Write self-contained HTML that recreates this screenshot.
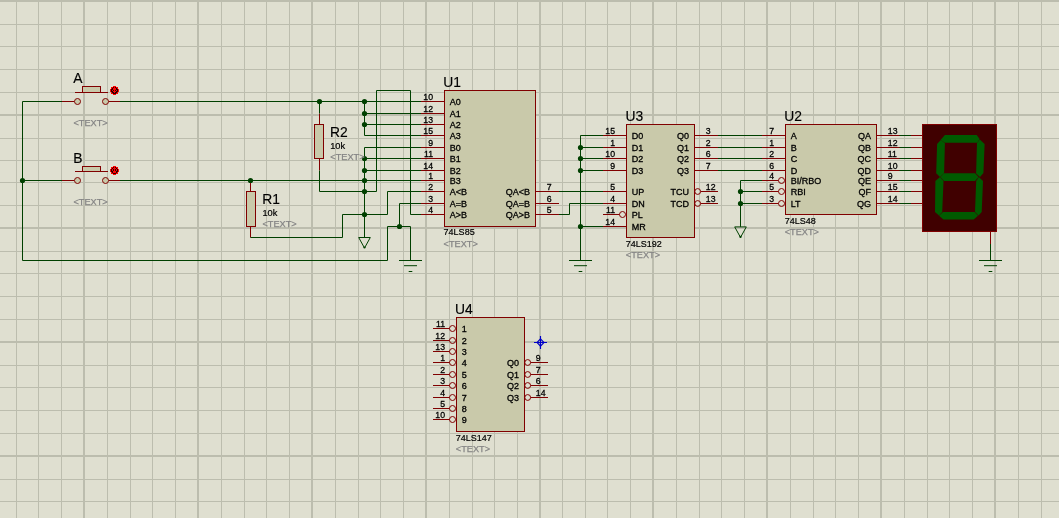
<!DOCTYPE html>
<html><head><meta charset="utf-8"><style>html,body{margin:0;padding:0;background:#dfdfd0;width:1059px;height:518px;overflow:hidden}svg{display:block}</style></head>
<body><svg width="1059" height="518" viewBox="0 0 1059 518" style="will-change:transform">
<rect width="1059" height="518" fill="#dfdfd0"/>
<g fill="#bcbdae"><rect x="16" y="0" width="1" height="518"/><rect x="38" y="0" width="1" height="518"/><rect x="61" y="0" width="1" height="518"/><rect x="83" y="0" width="2" height="518"/><rect x="107" y="0" width="1" height="518"/><rect x="130" y="0" width="1" height="518"/><rect x="152" y="0" width="1" height="518"/><rect x="175" y="0" width="1" height="518"/><rect x="197" y="0" width="2" height="518"/><rect x="221" y="0" width="1" height="518"/><rect x="244" y="0" width="1" height="518"/><rect x="266" y="0" width="1" height="518"/><rect x="289" y="0" width="1" height="518"/><rect x="311" y="0" width="2" height="518"/><rect x="335" y="0" width="1" height="518"/><rect x="358" y="0" width="1" height="518"/><rect x="380" y="0" width="1" height="518"/><rect x="403" y="0" width="1" height="518"/><rect x="425" y="0" width="2" height="518"/><rect x="449" y="0" width="1" height="518"/><rect x="472" y="0" width="1" height="518"/><rect x="494" y="0" width="1" height="518"/><rect x="517" y="0" width="1" height="518"/><rect x="539" y="0" width="2" height="518"/><rect x="562" y="0" width="1" height="518"/><rect x="585" y="0" width="1" height="518"/><rect x="607" y="0" width="1" height="518"/><rect x="630" y="0" width="1" height="518"/><rect x="652" y="0" width="2" height="518"/><rect x="676" y="0" width="1" height="518"/><rect x="699" y="0" width="1" height="518"/><rect x="721" y="0" width="1" height="518"/><rect x="744" y="0" width="1" height="518"/><rect x="766" y="0" width="2" height="518"/><rect x="790" y="0" width="1" height="518"/><rect x="813" y="0" width="1" height="518"/><rect x="835" y="0" width="1" height="518"/><rect x="858" y="0" width="1" height="518"/><rect x="880" y="0" width="2" height="518"/><rect x="904" y="0" width="1" height="518"/><rect x="927" y="0" width="1" height="518"/><rect x="949" y="0" width="1" height="518"/><rect x="972" y="0" width="1" height="518"/><rect x="994" y="0" width="2" height="518"/><rect x="1018" y="0" width="1" height="518"/><rect x="1041" y="0" width="1" height="518"/><rect x="0" y="0" width="1059" height="2"/><rect x="0" y="24" width="1059" height="1"/><rect x="0" y="46" width="1059" height="1"/><rect x="0" y="69" width="1059" height="1"/><rect x="0" y="92" width="1059" height="1"/><rect x="0" y="114" width="1059" height="2"/><rect x="0" y="138" width="1059" height="1"/><rect x="0" y="160" width="1059" height="1"/><rect x="0" y="182" width="1059" height="1"/><rect x="0" y="205" width="1059" height="1"/><rect x="0" y="227" width="1059" height="2"/><rect x="0" y="251" width="1059" height="1"/><rect x="0" y="273" width="1059" height="1"/><rect x="0" y="296" width="1059" height="1"/><rect x="0" y="319" width="1059" height="1"/><rect x="0" y="341" width="1059" height="2"/><rect x="0" y="365" width="1059" height="1"/><rect x="0" y="387" width="1059" height="1"/><rect x="0" y="410" width="1059" height="1"/><rect x="0" y="433" width="1059" height="1"/><rect x="0" y="455" width="1059" height="2"/><rect x="0" y="479" width="1059" height="1"/><rect x="0" y="501" width="1059" height="1"/></g>
<g fill="none" stroke="#800000" stroke-width="1"><path d="M62 101.5 L74.5 101.5"/><path d="M108.5 101.5 L120 101.5"/><circle cx="77.5" cy="101.5" r="3" fill="#c9c9aa"/><circle cx="105.5" cy="101.5" r="3" fill="#c9c9aa"/><path d="M75 92.5 L108 92.5"/><path d="M62 180.5 L74.5 180.5"/><path d="M108.5 180.5 L120 180.5"/><circle cx="77.5" cy="180.5" r="3" fill="#c9c9aa"/><circle cx="105.5" cy="180.5" r="3" fill="#c9c9aa"/><path d="M75 171.5 L108 171.5"/><path d="M250.5 180.5 L250.5 191"/><path d="M250.5 226.5 L250.5 237.5"/><path d="M319.5 113.5 L319.5 124.5"/><path d="M319.5 158.5 L319.5 170.5"/><path d="M421.0 101.5 L444.5 101.5"/><path d="M421.0 113.5 L444.5 113.5"/><path d="M421.0 124.5 L444.5 124.5"/><path d="M421.0 135.5 L444.5 135.5"/><path d="M421.0 147.5 L444.5 147.5"/><path d="M421.0 158.5 L444.5 158.5"/><path d="M421.0 170.5 L444.5 170.5"/><path d="M421.0 180.5 L444.5 180.5"/><path d="M421.0 191.5 L444.5 191.5"/><path d="M421.0 203.5 L444.5 203.5"/><path d="M421.0 214.5 L444.5 214.5"/><path d="M535.5 191.5 L559.0 191.5"/><path d="M535.5 203.5 L559.0 203.5"/><path d="M535.5 214.5 L559.0 214.5"/><path d="M603.0 135.5 L626.5 135.5"/><path d="M603.0 147.5 L626.5 147.5"/><path d="M603.0 158.5 L626.5 158.5"/><path d="M603.0 170.5 L626.5 170.5"/><path d="M603.0 191.5 L626.5 191.5"/><path d="M603.0 203.5 L626.5 203.5"/><path d="M603.0 214.5 L619.5 214.5"/><circle cx="622.5" cy="214.5" r="3" fill="none"/><path d="M603.0 226.5 L626.5 226.5"/><path d="M694.5 135.5 L718.0 135.5"/><path d="M694.5 147.5 L718.0 147.5"/><path d="M694.5 158.5 L718.0 158.5"/><path d="M694.5 170.5 L718.0 170.5"/><circle cx="697.7" cy="191.5" r="2.9" fill="none"/><path d="M700.6 191.5 L718.0 191.5"/><circle cx="697.7" cy="203.5" r="2.9" fill="none"/><path d="M700.6 203.5 L718.0 203.5"/><path d="M762.0 135.5 L785.5 135.5"/><path d="M762.0 147.5 L785.5 147.5"/><path d="M762.0 158.5 L785.5 158.5"/><path d="M762.0 170.5 L785.5 170.5"/><path d="M762.0 180.5 L778.5 180.5"/><circle cx="781.5" cy="180.5" r="3" fill="none"/><path d="M762.0 191.5 L778.5 191.5"/><circle cx="781.5" cy="191.5" r="3" fill="none"/><path d="M762.0 203.5 L778.5 203.5"/><circle cx="781.5" cy="203.5" r="3" fill="none"/><path d="M876.5 135.5 L900.0 135.5"/><path d="M876.5 147.5 L900.0 147.5"/><path d="M876.5 158.5 L900.0 158.5"/><path d="M876.5 170.5 L900.0 170.5"/><path d="M876.5 180.5 L900.0 180.5"/><path d="M876.5 191.5 L900.0 191.5"/><path d="M876.5 203.5 L900.0 203.5"/><path d="M433.0 328.5 L449.5 328.5"/><circle cx="452.5" cy="328.5" r="3" fill="none"/><path d="M433.0 340.5 L449.5 340.5"/><circle cx="452.5" cy="340.5" r="3" fill="none"/><path d="M433.0 351.5 L449.5 351.5"/><circle cx="452.5" cy="351.5" r="3" fill="none"/><path d="M433.0 362.5 L449.5 362.5"/><circle cx="452.5" cy="362.5" r="3" fill="none"/><path d="M433.0 374.5 L449.5 374.5"/><circle cx="452.5" cy="374.5" r="3" fill="none"/><path d="M433.0 385.5 L449.5 385.5"/><circle cx="452.5" cy="385.5" r="3" fill="none"/><path d="M433.0 397.5 L449.5 397.5"/><circle cx="452.5" cy="397.5" r="3" fill="none"/><path d="M433.0 408.5 L449.5 408.5"/><circle cx="452.5" cy="408.5" r="3" fill="none"/><path d="M433.0 419.5 L449.5 419.5"/><circle cx="452.5" cy="419.5" r="3" fill="none"/><circle cx="527.7" cy="362.5" r="2.9" fill="none"/><path d="M530.6 362.5 L548.0 362.5"/><circle cx="527.7" cy="374.5" r="2.9" fill="none"/><path d="M530.6 374.5 L548.0 374.5"/><circle cx="527.7" cy="385.5" r="2.9" fill="none"/><path d="M530.6 385.5 L548.0 385.5"/><circle cx="527.7" cy="397.5" r="2.9" fill="none"/><path d="M530.6 397.5 L548.0 397.5"/><path d="M899.5 135.5 L900 135.5"/><path d="M911 135.5 L922.5 135.5"/><path d="M899.5 147.5 L900 147.5"/><path d="M911 147.5 L922.5 147.5"/><path d="M899.5 158.5 L900 158.5"/><path d="M911 158.5 L922.5 158.5"/><path d="M899.5 170.5 L900 170.5"/><path d="M911 170.5 L922.5 170.5"/><path d="M899.5 180.5 L900 180.5"/><path d="M911 180.5 L922.5 180.5"/><path d="M899.5 191.5 L900 191.5"/><path d="M911 191.5 L922.5 191.5"/><path d="M899.5 203.5 L900 203.5"/><path d="M911 203.5 L922.5 203.5"/><path d="M990.5 231.5 L990.5 244"/></g>
<g stroke-width="1"><rect x="82.5" y="86.5" width="18" height="6.0" fill="#c9c9aa" stroke="#800000"/><g shape-rendering="crispEdges"><rect x="113" y="86" width="3" height="1" fill="#ff0000"/><rect x="111" y="87" width="7" height="1" fill="#ff0000"/><rect x="111" y="88" width="7" height="1" fill="#ff0000"/><rect x="110" y="89" width="9" height="1" fill="#ff0000"/><rect x="110" y="90" width="9" height="1" fill="#ff0000"/><rect x="110" y="91" width="9" height="1" fill="#ff0000"/><rect x="111" y="92" width="7" height="1" fill="#ff0000"/><rect x="111" y="93" width="7" height="1" fill="#ff0000"/><rect x="113" y="94" width="3" height="1" fill="#ff0000"/><rect x="113" y="87" width="1" height="1" fill="#2a0000"/><rect x="115" y="87" width="1" height="1" fill="#2a0000"/><rect x="112" y="88" width="1" height="1" fill="#2a0000"/><rect x="116" y="88" width="1" height="1" fill="#2a0000"/><rect x="111" y="89" width="1" height="1" fill="#2a0000"/><rect x="112" y="89" width="1" height="1" fill="#2a0000"/><rect x="116" y="89" width="1" height="1" fill="#2a0000"/><rect x="117" y="89" width="1" height="1" fill="#2a0000"/><rect x="111" y="90" width="1" height="1" fill="#2a0000"/><rect x="113" y="90" width="1" height="1" fill="#2a0000"/><rect x="115" y="90" width="1" height="1" fill="#2a0000"/><rect x="117" y="90" width="1" height="1" fill="#2a0000"/><rect x="111" y="91" width="1" height="1" fill="#2a0000"/><rect x="112" y="91" width="1" height="1" fill="#2a0000"/><rect x="116" y="91" width="1" height="1" fill="#2a0000"/><rect x="117" y="91" width="1" height="1" fill="#2a0000"/><rect x="112" y="92" width="1" height="1" fill="#2a0000"/><rect x="113" y="92" width="1" height="1" fill="#2a0000"/><rect x="115" y="92" width="1" height="1" fill="#2a0000"/><rect x="116" y="92" width="1" height="1" fill="#2a0000"/><rect x="113" y="93" width="1" height="1" fill="#2a0000"/><rect x="114" y="93" width="1" height="1" fill="#2a0000"/><rect x="115" y="93" width="1" height="1" fill="#2a0000"/></g><rect x="82.5" y="166.5" width="18" height="5.0" fill="#c9c9aa" stroke="#800000"/><g shape-rendering="crispEdges"><rect x="113" y="166" width="3" height="1" fill="#ff0000"/><rect x="111" y="167" width="7" height="1" fill="#ff0000"/><rect x="111" y="168" width="7" height="1" fill="#ff0000"/><rect x="110" y="169" width="9" height="1" fill="#ff0000"/><rect x="110" y="170" width="9" height="1" fill="#ff0000"/><rect x="110" y="171" width="9" height="1" fill="#ff0000"/><rect x="111" y="172" width="7" height="1" fill="#ff0000"/><rect x="111" y="173" width="7" height="1" fill="#ff0000"/><rect x="113" y="174" width="3" height="1" fill="#ff0000"/><rect x="113" y="167" width="1" height="1" fill="#2a0000"/><rect x="115" y="167" width="1" height="1" fill="#2a0000"/><rect x="112" y="168" width="1" height="1" fill="#2a0000"/><rect x="116" y="168" width="1" height="1" fill="#2a0000"/><rect x="111" y="169" width="1" height="1" fill="#2a0000"/><rect x="113" y="169" width="1" height="1" fill="#2a0000"/><rect x="115" y="169" width="1" height="1" fill="#2a0000"/><rect x="117" y="169" width="1" height="1" fill="#2a0000"/><rect x="111" y="170" width="1" height="1" fill="#2a0000"/><rect x="113" y="170" width="1" height="1" fill="#2a0000"/><rect x="115" y="170" width="1" height="1" fill="#2a0000"/><rect x="117" y="170" width="1" height="1" fill="#2a0000"/><rect x="111" y="171" width="1" height="1" fill="#2a0000"/><rect x="112" y="171" width="1" height="1" fill="#2a0000"/><rect x="116" y="171" width="1" height="1" fill="#2a0000"/><rect x="117" y="171" width="1" height="1" fill="#2a0000"/><rect x="112" y="172" width="1" height="1" fill="#2a0000"/><rect x="116" y="172" width="1" height="1" fill="#2a0000"/><rect x="113" y="173" width="1" height="1" fill="#2a0000"/><rect x="114" y="173" width="1" height="1" fill="#2a0000"/><rect x="115" y="173" width="1" height="1" fill="#2a0000"/></g><rect x="246.5" y="191.5" width="9" height="35" fill="#c9c9aa" stroke="#800000"/><rect x="314.5" y="124.5" width="9" height="34" fill="#c9c9aa" stroke="#800000"/><rect x="444.5" y="90.5" width="91.0" height="136.0" fill="#c9c9aa" stroke="#800000"/><rect x="626.5" y="124.5" width="68.0" height="113.0" fill="#c9c9aa" stroke="#800000"/><rect x="785.5" y="124.5" width="91.0" height="90.0" fill="#c9c9aa" stroke="#800000"/><rect x="456.5" y="317.5" width="68.0" height="114.0" fill="#c9c9aa" stroke="#800000"/><rect x="922.5" y="124.5" width="74" height="107" fill="#400000" stroke="#800000"/><polygon points="940.6,139.9 944.9,135 976.7,135 979.6,139.1 977.3,142.8 944.9,142.8" fill="#005a00"/><polygon points="977,143 979.8,139.5 984.6,144 983.4,173 980,177 976.1,173.5" fill="#005a00"/><polygon points="937.1,144 940.8,139.9 944.9,143 944.1,173.2 940,177 936.2,173.2" fill="#005a00"/><polygon points="940.4,177 944,173.2 975,173.2 978.5,177 975,180.9 944,180.9" fill="#005a00"/><polygon points="935.4,181 940,177 943.5,181 942.2,212 939,215.5 935,212" fill="#005a00"/><polygon points="976.2,181 978.8,177 983,181 981.7,212 978.5,215.5 975,212" fill="#005a00"/><polygon points="939,215.8 943,212.1 974.5,212.1 978,215.8 973.7,219.5 943.5,219.5" fill="#005a00"/><g stroke="#0000c8" fill="none" stroke-width="1.15"><path d="M540.5 338.8 L544 342.5 L540.5 346.2 L537 342.5 Z"/><path d="M540.5 336 V349 M534 342.5 H547"/></g></g>
<g fill="none" stroke="#004000" stroke-width="1"><path d="M22.5 101.5 L62 101.5"/><path d="M120 101.5 L421 101.5"/><path d="M22.5 101.5 L22.5 260.5 L387.5 260.5"/><path d="M22.5 180.5 L62 180.5"/><path d="M120 180.5 L421 180.5"/><path d="M250.5 237.5 L342.5 237.5 L342.5 214.5 L387.5 214.5 L387.5 191.5 L421 191.5"/><path d="M319.5 101.5 L319.5 113.5"/><path d="M319.5 170.5 L319.5 191.5 L376.5 191.5 L376.5 90.5 L410.5 90.5 L410.5 214.5 L421 214.5"/><path d="M364.5 101.5 L364.5 135.5 L421 135.5"/><path d="M364.5 113.5 L421 113.5"/><path d="M364.5 124.5 L421 124.5"/><path d="M421 147.5 L364.5 147.5 L364.5 237.5"/><path d="M364.5 158.5 L421 158.5"/><path d="M364.5 170.5 L421 170.5"/><path d="M358.7 237.5 L370.3 237.5 L364.5 248.0 Z" fill="none"/><path d="M421 203.5 L399.5 203.5 L399.5 226.5"/><path d="M387.5 260.5 L387.5 226.5 L410.5 226.5 L410.5 260.5"/><path d="M399.0 260.5 L422.0 260.5 M404.0 265.7 L417.0 265.7 M408.7 271.5 L412.3 271.5"/><path d="M559 191.5 L603 191.5"/><path d="M559 214.5 L569.5 214.5 L569.5 203.5 L603 203.5"/><path d="M603 135.5 L580.5 135.5 L580.5 260.5"/><path d="M580.5 147.5 L603 147.5"/><path d="M580.5 158.5 L603 158.5"/><path d="M580.5 170.5 L603 170.5"/><path d="M580.5 226.5 L603 226.5"/><path d="M569.0 260.5 L592.0 260.5 M574.0 265.7 L587.0 265.7 M578.7 271.5 L582.3 271.5"/><path d="M718 135.5 L762 135.5"/><path d="M718 147.5 L762 147.5"/><path d="M718 158.5 L762 158.5"/><path d="M718 170.5 L762 170.5"/><path d="M762 180.5 L740.5 180.5 L740.5 226.9"/><path d="M740.5 191.5 L762 191.5"/><path d="M740.5 203.5 L762 203.5"/><path d="M734.7 226.9 L746.3 226.9 L740.5 237.4 Z" fill="none"/><path d="M899.5 135.5 L911 135.5"/><path d="M899.5 147.5 L911 147.5"/><path d="M899.5 158.5 L911 158.5"/><path d="M899.5 170.5 L911 170.5"/><path d="M899.5 180.5 L911 180.5"/><path d="M899.5 191.5 L911 191.5"/><path d="M899.5 203.5 L911 203.5"/><path d="M990.5 244 L990.5 260.5"/><path d="M979.0 260.5 L1002.0 260.5 M984.0 265.7 L997.0 265.7 M988.7 271.5 L992.3 271.5"/></g>
<g fill="#004000"><circle cx="22.5" cy="180.5" r="2.6"/><circle cx="250.5" cy="180.5" r="2.6"/><circle cx="319.5" cy="101.5" r="2.6"/><circle cx="364.5" cy="101.5" r="2.6"/><circle cx="364.5" cy="113.5" r="2.6"/><circle cx="364.5" cy="124.5" r="2.6"/><circle cx="364.5" cy="158.5" r="2.6"/><circle cx="364.5" cy="170.5" r="2.6"/><circle cx="364.5" cy="180.5" r="2.6"/><circle cx="364.5" cy="191.5" r="2.6"/><circle cx="364.5" cy="214.5" r="2.6"/><circle cx="364.5" cy="247.5" r="1.1"/><circle cx="399.5" cy="226.5" r="2.6"/><circle cx="580.5" cy="147.5" r="2.6"/><circle cx="580.5" cy="158.5" r="2.6"/><circle cx="580.5" cy="170.5" r="2.6"/><circle cx="580.5" cy="226.5" r="2.6"/><circle cx="740.5" cy="191.5" r="2.6"/><circle cx="740.5" cy="203.5" r="2.6"/><circle cx="740.5" cy="236.9" r="1.1"/></g>
<g font-family='"Liberation Sans", sans-serif'><text transform="translate(73.30 83.20) scale(0.99 1)" font-size="14" fill="#000000" stroke="#000000" stroke-width="0.15" text-anchor="start">A</text><text transform="translate(73.50 125.90) scale(1.0 1)" font-size="9.2" fill="#858585" stroke="#858585" stroke-width="0.25" text-anchor="start">&lt;TEXT&gt;</text><text transform="translate(73.30 163.20) scale(0.99 1)" font-size="14" fill="#000000" stroke="#000000" stroke-width="0.15" text-anchor="start">B</text><text transform="translate(73.50 204.90) scale(1.0 1)" font-size="9.2" fill="#858585" stroke="#858585" stroke-width="0.25" text-anchor="start">&lt;TEXT&gt;</text><text transform="translate(262.20 203.80) scale(0.99 1)" font-size="14" fill="#000000" stroke="#000000" stroke-width="0.15" text-anchor="start">R1</text><text transform="translate(262.40 216.10) scale(1.05 1)" font-size="8.8" fill="#000000" stroke="#000000" stroke-width="0.2" text-anchor="start">10k</text><text transform="translate(262.50 227.30) scale(1.0 1)" font-size="9.2" fill="#858585" stroke="#858585" stroke-width="0.25" text-anchor="start">&lt;TEXT&gt;</text><text transform="translate(330.00 137.30) scale(0.99 1)" font-size="14" fill="#000000" stroke="#000000" stroke-width="0.15" text-anchor="start">R2</text><text transform="translate(330.20 148.60) scale(1.05 1)" font-size="8.8" fill="#000000" stroke="#000000" stroke-width="0.2" text-anchor="start">10k</text><text transform="translate(330.30 160.40) scale(1.0 1)" font-size="9.2" fill="#858585" stroke="#858585" stroke-width="0.25" text-anchor="start">&lt;TEXT&gt;</text><text transform="translate(449.70 104.85) scale(1.0 1)" font-size="9.0" fill="#000000" stroke="#000000" stroke-width="0.3" text-anchor="start">A0</text><text transform="translate(433.00 99.70) scale(0.92 1)" font-size="9.5" fill="#000000" stroke="#000000" stroke-width="0.3" text-anchor="end">10</text><text transform="translate(449.70 116.85) scale(1.0 1)" font-size="9.0" fill="#000000" stroke="#000000" stroke-width="0.3" text-anchor="start">A1</text><text transform="translate(433.00 111.70) scale(0.92 1)" font-size="9.5" fill="#000000" stroke="#000000" stroke-width="0.3" text-anchor="end">12</text><text transform="translate(449.70 127.85) scale(1.0 1)" font-size="9.0" fill="#000000" stroke="#000000" stroke-width="0.3" text-anchor="start">A2</text><text transform="translate(433.00 122.70) scale(0.92 1)" font-size="9.5" fill="#000000" stroke="#000000" stroke-width="0.3" text-anchor="end">13</text><text transform="translate(449.70 138.85) scale(1.0 1)" font-size="9.0" fill="#000000" stroke="#000000" stroke-width="0.3" text-anchor="start">A3</text><text transform="translate(433.00 133.70) scale(0.92 1)" font-size="9.5" fill="#000000" stroke="#000000" stroke-width="0.3" text-anchor="end">15</text><text transform="translate(449.70 150.85) scale(1.0 1)" font-size="9.0" fill="#000000" stroke="#000000" stroke-width="0.3" text-anchor="start">B0</text><text transform="translate(433.00 145.70) scale(0.92 1)" font-size="9.5" fill="#000000" stroke="#000000" stroke-width="0.3" text-anchor="end">9</text><text transform="translate(449.70 161.85) scale(1.0 1)" font-size="9.0" fill="#000000" stroke="#000000" stroke-width="0.3" text-anchor="start">B1</text><text transform="translate(433.00 156.70) scale(0.92 1)" font-size="9.5" fill="#000000" stroke="#000000" stroke-width="0.3" text-anchor="end">11</text><text transform="translate(449.70 173.85) scale(1.0 1)" font-size="9.0" fill="#000000" stroke="#000000" stroke-width="0.3" text-anchor="start">B2</text><text transform="translate(433.00 168.70) scale(0.92 1)" font-size="9.5" fill="#000000" stroke="#000000" stroke-width="0.3" text-anchor="end">14</text><text transform="translate(449.70 183.85) scale(1.0 1)" font-size="9.0" fill="#000000" stroke="#000000" stroke-width="0.3" text-anchor="start">B3</text><text transform="translate(433.00 178.70) scale(0.92 1)" font-size="9.5" fill="#000000" stroke="#000000" stroke-width="0.3" text-anchor="end">1</text><text transform="translate(449.70 194.85) scale(1.0 1)" font-size="9.0" fill="#000000" stroke="#000000" stroke-width="0.3" text-anchor="start">A&lt;B</text><text transform="translate(433.00 189.70) scale(0.92 1)" font-size="9.5" fill="#000000" stroke="#000000" stroke-width="0.3" text-anchor="end">2</text><text transform="translate(449.70 206.85) scale(1.0 1)" font-size="9.0" fill="#000000" stroke="#000000" stroke-width="0.3" text-anchor="start">A=B</text><text transform="translate(433.00 201.70) scale(0.92 1)" font-size="9.5" fill="#000000" stroke="#000000" stroke-width="0.3" text-anchor="end">3</text><text transform="translate(449.70 217.85) scale(1.0 1)" font-size="9.0" fill="#000000" stroke="#000000" stroke-width="0.3" text-anchor="start">A&gt;B</text><text transform="translate(433.00 212.70) scale(0.92 1)" font-size="9.5" fill="#000000" stroke="#000000" stroke-width="0.3" text-anchor="end">4</text><text transform="translate(530.00 194.85) scale(1.0 1)" font-size="9.0" fill="#000000" stroke="#000000" stroke-width="0.3" text-anchor="end">QA&lt;B</text><text transform="translate(546.80 189.70) scale(0.92 1)" font-size="9.5" fill="#000000" stroke="#000000" stroke-width="0.3" text-anchor="start">7</text><text transform="translate(530.00 206.85) scale(1.0 1)" font-size="9.0" fill="#000000" stroke="#000000" stroke-width="0.3" text-anchor="end">QA=B</text><text transform="translate(546.80 201.70) scale(0.92 1)" font-size="9.5" fill="#000000" stroke="#000000" stroke-width="0.3" text-anchor="start">6</text><text transform="translate(530.00 217.85) scale(1.0 1)" font-size="9.0" fill="#000000" stroke="#000000" stroke-width="0.3" text-anchor="end">QA&gt;B</text><text transform="translate(546.80 212.70) scale(0.92 1)" font-size="9.5" fill="#000000" stroke="#000000" stroke-width="0.3" text-anchor="start">5</text><text transform="translate(443.20 87.00) scale(0.99 1)" font-size="14" fill="#000000" stroke="#000000" stroke-width="0.15" text-anchor="start">U1</text><text transform="translate(443.60 234.90) scale(0.94 1)" font-size="9.6" fill="#000000" stroke="#000000" stroke-width="0.2" text-anchor="start">74LS85</text><text transform="translate(443.60 246.50) scale(1.0 1)" font-size="9.2" fill="#858585" stroke="#858585" stroke-width="0.25" text-anchor="start">&lt;TEXT&gt;</text><text transform="translate(631.70 138.85) scale(1.0 1)" font-size="9.0" fill="#000000" stroke="#000000" stroke-width="0.3" text-anchor="start">D0</text><text transform="translate(615.00 133.70) scale(0.92 1)" font-size="9.5" fill="#000000" stroke="#000000" stroke-width="0.3" text-anchor="end">15</text><text transform="translate(631.70 150.85) scale(1.0 1)" font-size="9.0" fill="#000000" stroke="#000000" stroke-width="0.3" text-anchor="start">D1</text><text transform="translate(615.00 145.70) scale(0.92 1)" font-size="9.5" fill="#000000" stroke="#000000" stroke-width="0.3" text-anchor="end">1</text><text transform="translate(631.70 161.85) scale(1.0 1)" font-size="9.0" fill="#000000" stroke="#000000" stroke-width="0.3" text-anchor="start">D2</text><text transform="translate(615.00 156.70) scale(0.92 1)" font-size="9.5" fill="#000000" stroke="#000000" stroke-width="0.3" text-anchor="end">10</text><text transform="translate(631.70 173.85) scale(1.0 1)" font-size="9.0" fill="#000000" stroke="#000000" stroke-width="0.3" text-anchor="start">D3</text><text transform="translate(615.00 168.70) scale(0.92 1)" font-size="9.5" fill="#000000" stroke="#000000" stroke-width="0.3" text-anchor="end">9</text><text transform="translate(631.70 194.85) scale(1.0 1)" font-size="9.0" fill="#000000" stroke="#000000" stroke-width="0.3" text-anchor="start">UP</text><text transform="translate(615.00 189.70) scale(0.92 1)" font-size="9.5" fill="#000000" stroke="#000000" stroke-width="0.3" text-anchor="end">5</text><text transform="translate(631.70 206.85) scale(1.0 1)" font-size="9.0" fill="#000000" stroke="#000000" stroke-width="0.3" text-anchor="start">DN</text><text transform="translate(615.00 201.70) scale(0.92 1)" font-size="9.5" fill="#000000" stroke="#000000" stroke-width="0.3" text-anchor="end">4</text><text transform="translate(631.70 217.85) scale(1.0 1)" font-size="9.0" fill="#000000" stroke="#000000" stroke-width="0.3" text-anchor="start">PL</text><text transform="translate(615.00 212.70) scale(0.92 1)" font-size="9.5" fill="#000000" stroke="#000000" stroke-width="0.3" text-anchor="end">11</text><text transform="translate(631.70 229.85) scale(1.0 1)" font-size="9.0" fill="#000000" stroke="#000000" stroke-width="0.3" text-anchor="start">MR</text><text transform="translate(615.00 224.70) scale(0.92 1)" font-size="9.5" fill="#000000" stroke="#000000" stroke-width="0.3" text-anchor="end">14</text><text transform="translate(689.00 138.85) scale(1.0 1)" font-size="9.0" fill="#000000" stroke="#000000" stroke-width="0.3" text-anchor="end">Q0</text><text transform="translate(705.80 133.70) scale(0.92 1)" font-size="9.5" fill="#000000" stroke="#000000" stroke-width="0.3" text-anchor="start">3</text><text transform="translate(689.00 150.85) scale(1.0 1)" font-size="9.0" fill="#000000" stroke="#000000" stroke-width="0.3" text-anchor="end">Q1</text><text transform="translate(705.80 145.70) scale(0.92 1)" font-size="9.5" fill="#000000" stroke="#000000" stroke-width="0.3" text-anchor="start">2</text><text transform="translate(689.00 161.85) scale(1.0 1)" font-size="9.0" fill="#000000" stroke="#000000" stroke-width="0.3" text-anchor="end">Q2</text><text transform="translate(705.80 156.70) scale(0.92 1)" font-size="9.5" fill="#000000" stroke="#000000" stroke-width="0.3" text-anchor="start">6</text><text transform="translate(689.00 173.85) scale(1.0 1)" font-size="9.0" fill="#000000" stroke="#000000" stroke-width="0.3" text-anchor="end">Q3</text><text transform="translate(705.80 168.70) scale(0.92 1)" font-size="9.5" fill="#000000" stroke="#000000" stroke-width="0.3" text-anchor="start">7</text><text transform="translate(689.00 194.85) scale(1.0 1)" font-size="9.0" fill="#000000" stroke="#000000" stroke-width="0.3" text-anchor="end">TCU</text><text transform="translate(705.80 189.70) scale(0.92 1)" font-size="9.5" fill="#000000" stroke="#000000" stroke-width="0.3" text-anchor="start">12</text><text transform="translate(689.00 206.85) scale(1.0 1)" font-size="9.0" fill="#000000" stroke="#000000" stroke-width="0.3" text-anchor="end">TCD</text><text transform="translate(705.80 201.70) scale(0.92 1)" font-size="9.5" fill="#000000" stroke="#000000" stroke-width="0.3" text-anchor="start">13</text><text transform="translate(625.60 120.70) scale(0.99 1)" font-size="14" fill="#000000" stroke="#000000" stroke-width="0.15" text-anchor="start">U3</text><text transform="translate(625.80 247.00) scale(0.94 1)" font-size="9.6" fill="#000000" stroke="#000000" stroke-width="0.2" text-anchor="start">74LS192</text><text transform="translate(625.80 257.90) scale(1.0 1)" font-size="9.2" fill="#858585" stroke="#858585" stroke-width="0.25" text-anchor="start">&lt;TEXT&gt;</text><text transform="translate(790.70 138.85) scale(1.0 1)" font-size="9.0" fill="#000000" stroke="#000000" stroke-width="0.3" text-anchor="start">A</text><text transform="translate(774.00 133.70) scale(0.92 1)" font-size="9.5" fill="#000000" stroke="#000000" stroke-width="0.3" text-anchor="end">7</text><text transform="translate(790.70 150.85) scale(1.0 1)" font-size="9.0" fill="#000000" stroke="#000000" stroke-width="0.3" text-anchor="start">B</text><text transform="translate(774.00 145.70) scale(0.92 1)" font-size="9.5" fill="#000000" stroke="#000000" stroke-width="0.3" text-anchor="end">1</text><text transform="translate(790.70 161.85) scale(1.0 1)" font-size="9.0" fill="#000000" stroke="#000000" stroke-width="0.3" text-anchor="start">C</text><text transform="translate(774.00 156.70) scale(0.92 1)" font-size="9.5" fill="#000000" stroke="#000000" stroke-width="0.3" text-anchor="end">2</text><text transform="translate(790.70 173.85) scale(1.0 1)" font-size="9.0" fill="#000000" stroke="#000000" stroke-width="0.3" text-anchor="start">D</text><text transform="translate(774.00 168.70) scale(0.92 1)" font-size="9.5" fill="#000000" stroke="#000000" stroke-width="0.3" text-anchor="end">6</text><text transform="translate(790.70 183.85) scale(1.0 1)" font-size="9.0" fill="#000000" stroke="#000000" stroke-width="0.3" text-anchor="start">BI/RBO</text><text transform="translate(774.00 178.70) scale(0.92 1)" font-size="9.5" fill="#000000" stroke="#000000" stroke-width="0.3" text-anchor="end">4</text><text transform="translate(790.70 194.85) scale(1.0 1)" font-size="9.0" fill="#000000" stroke="#000000" stroke-width="0.3" text-anchor="start">RBI</text><text transform="translate(774.00 189.70) scale(0.92 1)" font-size="9.5" fill="#000000" stroke="#000000" stroke-width="0.3" text-anchor="end">5</text><text transform="translate(790.70 206.85) scale(1.0 1)" font-size="9.0" fill="#000000" stroke="#000000" stroke-width="0.3" text-anchor="start">LT</text><text transform="translate(774.00 201.70) scale(0.92 1)" font-size="9.5" fill="#000000" stroke="#000000" stroke-width="0.3" text-anchor="end">3</text><text transform="translate(871.00 138.85) scale(1.0 1)" font-size="9.0" fill="#000000" stroke="#000000" stroke-width="0.3" text-anchor="end">QA</text><text transform="translate(887.80 133.70) scale(0.92 1)" font-size="9.5" fill="#000000" stroke="#000000" stroke-width="0.3" text-anchor="start">13</text><text transform="translate(871.00 150.85) scale(1.0 1)" font-size="9.0" fill="#000000" stroke="#000000" stroke-width="0.3" text-anchor="end">QB</text><text transform="translate(887.80 145.70) scale(0.92 1)" font-size="9.5" fill="#000000" stroke="#000000" stroke-width="0.3" text-anchor="start">12</text><text transform="translate(871.00 161.85) scale(1.0 1)" font-size="9.0" fill="#000000" stroke="#000000" stroke-width="0.3" text-anchor="end">QC</text><text transform="translate(887.80 156.70) scale(0.92 1)" font-size="9.5" fill="#000000" stroke="#000000" stroke-width="0.3" text-anchor="start">11</text><text transform="translate(871.00 173.85) scale(1.0 1)" font-size="9.0" fill="#000000" stroke="#000000" stroke-width="0.3" text-anchor="end">QD</text><text transform="translate(887.80 168.70) scale(0.92 1)" font-size="9.5" fill="#000000" stroke="#000000" stroke-width="0.3" text-anchor="start">10</text><text transform="translate(871.00 183.85) scale(1.0 1)" font-size="9.0" fill="#000000" stroke="#000000" stroke-width="0.3" text-anchor="end">QE</text><text transform="translate(887.80 178.70) scale(0.92 1)" font-size="9.5" fill="#000000" stroke="#000000" stroke-width="0.3" text-anchor="start">9</text><text transform="translate(871.00 194.85) scale(1.0 1)" font-size="9.0" fill="#000000" stroke="#000000" stroke-width="0.3" text-anchor="end">QF</text><text transform="translate(887.80 189.70) scale(0.92 1)" font-size="9.5" fill="#000000" stroke="#000000" stroke-width="0.3" text-anchor="start">15</text><text transform="translate(871.00 206.85) scale(1.0 1)" font-size="9.0" fill="#000000" stroke="#000000" stroke-width="0.3" text-anchor="end">QG</text><text transform="translate(887.80 201.70) scale(0.92 1)" font-size="9.5" fill="#000000" stroke="#000000" stroke-width="0.3" text-anchor="start">14</text><text transform="translate(784.20 121.00) scale(0.99 1)" font-size="14" fill="#000000" stroke="#000000" stroke-width="0.15" text-anchor="start">U2</text><text transform="translate(784.70 223.70) scale(0.94 1)" font-size="9.6" fill="#000000" stroke="#000000" stroke-width="0.2" text-anchor="start">74LS48</text><text transform="translate(784.70 234.90) scale(1.0 1)" font-size="9.2" fill="#858585" stroke="#858585" stroke-width="0.25" text-anchor="start">&lt;TEXT&gt;</text><text transform="translate(461.70 331.85) scale(1.0 1)" font-size="9.0" fill="#000000" stroke="#000000" stroke-width="0.3" text-anchor="start">1</text><text transform="translate(445.00 326.70) scale(0.92 1)" font-size="9.5" fill="#000000" stroke="#000000" stroke-width="0.3" text-anchor="end">11</text><text transform="translate(461.70 343.85) scale(1.0 1)" font-size="9.0" fill="#000000" stroke="#000000" stroke-width="0.3" text-anchor="start">2</text><text transform="translate(445.00 338.70) scale(0.92 1)" font-size="9.5" fill="#000000" stroke="#000000" stroke-width="0.3" text-anchor="end">12</text><text transform="translate(461.70 354.85) scale(1.0 1)" font-size="9.0" fill="#000000" stroke="#000000" stroke-width="0.3" text-anchor="start">3</text><text transform="translate(445.00 349.70) scale(0.92 1)" font-size="9.5" fill="#000000" stroke="#000000" stroke-width="0.3" text-anchor="end">13</text><text transform="translate(461.70 365.85) scale(1.0 1)" font-size="9.0" fill="#000000" stroke="#000000" stroke-width="0.3" text-anchor="start">4</text><text transform="translate(445.00 360.70) scale(0.92 1)" font-size="9.5" fill="#000000" stroke="#000000" stroke-width="0.3" text-anchor="end">1</text><text transform="translate(461.70 377.85) scale(1.0 1)" font-size="9.0" fill="#000000" stroke="#000000" stroke-width="0.3" text-anchor="start">5</text><text transform="translate(445.00 372.70) scale(0.92 1)" font-size="9.5" fill="#000000" stroke="#000000" stroke-width="0.3" text-anchor="end">2</text><text transform="translate(461.70 388.85) scale(1.0 1)" font-size="9.0" fill="#000000" stroke="#000000" stroke-width="0.3" text-anchor="start">6</text><text transform="translate(445.00 383.70) scale(0.92 1)" font-size="9.5" fill="#000000" stroke="#000000" stroke-width="0.3" text-anchor="end">3</text><text transform="translate(461.70 400.85) scale(1.0 1)" font-size="9.0" fill="#000000" stroke="#000000" stroke-width="0.3" text-anchor="start">7</text><text transform="translate(445.00 395.70) scale(0.92 1)" font-size="9.5" fill="#000000" stroke="#000000" stroke-width="0.3" text-anchor="end">4</text><text transform="translate(461.70 411.85) scale(1.0 1)" font-size="9.0" fill="#000000" stroke="#000000" stroke-width="0.3" text-anchor="start">8</text><text transform="translate(445.00 406.70) scale(0.92 1)" font-size="9.5" fill="#000000" stroke="#000000" stroke-width="0.3" text-anchor="end">5</text><text transform="translate(461.70 422.85) scale(1.0 1)" font-size="9.0" fill="#000000" stroke="#000000" stroke-width="0.3" text-anchor="start">9</text><text transform="translate(445.00 417.70) scale(0.92 1)" font-size="9.5" fill="#000000" stroke="#000000" stroke-width="0.3" text-anchor="end">10</text><text transform="translate(519.00 365.85) scale(1.0 1)" font-size="9.0" fill="#000000" stroke="#000000" stroke-width="0.3" text-anchor="end">Q0</text><text transform="translate(535.80 360.70) scale(0.92 1)" font-size="9.5" fill="#000000" stroke="#000000" stroke-width="0.3" text-anchor="start">9</text><text transform="translate(519.00 377.85) scale(1.0 1)" font-size="9.0" fill="#000000" stroke="#000000" stroke-width="0.3" text-anchor="end">Q1</text><text transform="translate(535.80 372.70) scale(0.92 1)" font-size="9.5" fill="#000000" stroke="#000000" stroke-width="0.3" text-anchor="start">7</text><text transform="translate(519.00 388.85) scale(1.0 1)" font-size="9.0" fill="#000000" stroke="#000000" stroke-width="0.3" text-anchor="end">Q2</text><text transform="translate(535.80 383.70) scale(0.92 1)" font-size="9.5" fill="#000000" stroke="#000000" stroke-width="0.3" text-anchor="start">6</text><text transform="translate(519.00 400.85) scale(1.0 1)" font-size="9.0" fill="#000000" stroke="#000000" stroke-width="0.3" text-anchor="end">Q3</text><text transform="translate(535.80 395.70) scale(0.92 1)" font-size="9.5" fill="#000000" stroke="#000000" stroke-width="0.3" text-anchor="start">14</text><text transform="translate(455.00 313.90) scale(0.99 1)" font-size="14" fill="#000000" stroke="#000000" stroke-width="0.15" text-anchor="start">U4</text><text transform="translate(455.80 441.10) scale(0.94 1)" font-size="9.6" fill="#000000" stroke="#000000" stroke-width="0.2" text-anchor="start">74LS147</text><text transform="translate(455.80 451.70) scale(1.0 1)" font-size="9.2" fill="#858585" stroke="#858585" stroke-width="0.25" text-anchor="start">&lt;TEXT&gt;</text></g>
</svg></body></html>
